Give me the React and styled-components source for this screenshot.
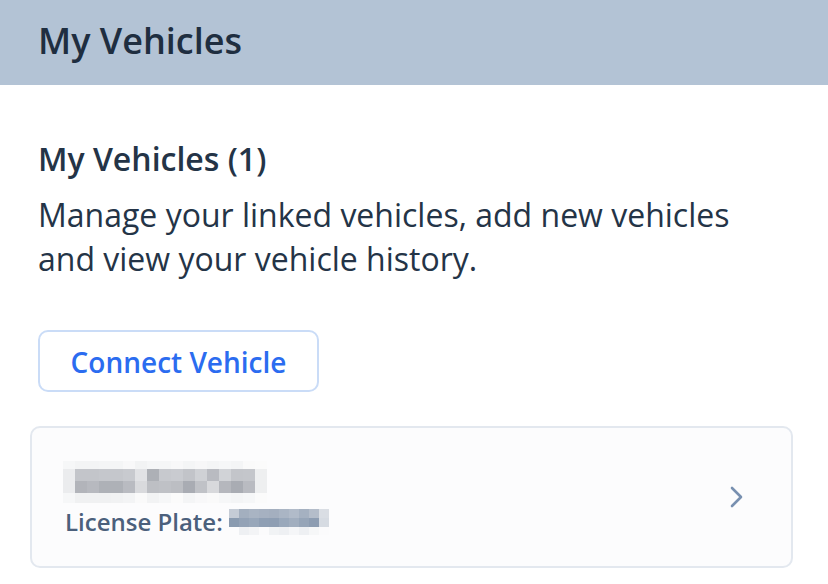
import React from "react";
import styled, { createGlobalStyle } from "styled-components";

const Global = createGlobalStyle`
  html, body { margin: 0; padding: 0; background: #ffffff; }
  body { font-family: "Open Sans", "Noto Sans", sans-serif; color: #243447; }
`;

const Page = styled.div`
  width: 828px;
  min-height: 584px;
  display: flex;
  flex-direction: column;
`;

const Header = styled.header`
  height: 85px;
  background: #b3c3d5;
  display: flex;
  align-items: center;
  padding: 0 38px;
  box-sizing: border-box;
`;

const HeaderTitle = styled.h1`
  margin: 0;
  font-size: 36px;
  font-weight: 600;
  color: #1f2e40;
  line-height: 1;
  padding-bottom: 4px;
`;

const Main = styled.main`
  display: flex;
  flex-direction: column;
  padding: 52px 35px 0 30px;
`;

const Intro = styled.section`
  padding-left: 8px;
  display: flex;
  flex-direction: column;
  align-items: flex-start;
`;

const SectionTitle = styled.h2`
  margin: 0;
  font-size: 32px;
  font-weight: 600;
  line-height: 44px;
  color: #243447;
`;

const Description = styled.p`
  margin: 12px 0 0;
  font-size: 32px;
  font-weight: 400;
  line-height: 44px;
  color: #243447;
`;

const OutlineButton = styled.button`
  margin-top: 49px;
  width: 281px;
  height: 62px;
  box-sizing: border-box;
  border: 2px solid #cadcf7;
  border-radius: 10px;
  background: #ffffff;
  font-family: inherit;
  font-size: 28px;
  font-weight: 600;
  color: #2b6cf0;
  display: flex;
  align-items: center;
  justify-content: center;
  padding: 2px 0 0;
  cursor: pointer;
`;

const VehicleCard = styled.div`
  margin-top: 34px;
  height: 142px;
  box-sizing: border-box;
  border: 2px solid #e3e8ef;
  border-radius: 10px;
  background: #fcfcfd;
  display: flex;
  align-items: center;
  justify-content: space-between;
  padding: 0 46px 0 31px;
`;

const VehicleInfo = styled.div`
  display: flex;
  flex-direction: column;
  padding-top: 4px;
`;

const PlateRow = styled.div`
  display: flex;
  align-items: center;
  font-size: 24px;
  font-weight: 600;
  color: #4b607c;
  line-height: 30px;
  margin-top: 4px;
  padding-left: 2px;
`;

const Chevron = styled.svg`
  width: 16px;
  height: 24px;
  flex: none;
`;

const nameRows = [
  ["#f6f7f8","#f3f4f5","#f3f4f5","#f4f5f6","#f4f5f6","#f8f8f9","#f2f3f4","#f5f6f7","#f5f6f7","#f8f8f9","#f4f5f6","#f7f7f8","#f4f5f6","#f6f7f8","#f4f5f6","#fafafa","#fbfbfb"],
  ["#ebecee","#c3c5ca","#c3c5ca","#c5c7cc","#c5c7cc","#c8cacf","#e1e2e5","#adb0b6","#c7c9ce","#c9cbd0","#c2c4c9","#cfd1d5","#b9bbc1","#d1d3d7","#c3c5ca","#c4c6cb","#eeeff0"],
  ["#ebecee","#b2b4ba","#b7b9bf","#aeb1b7","#aeb1b7","#b9bbc1","#d9dadd","#bdbfc4","#bfc1c6","#bcbec3","#a9acb3","#c0c2c7","#d8d9dc","#b5b7bd","#a9acb3","#b9bbc1","#eeeff0"],
  ["#f6f7f8","#f0f1f2","#f0f1f2","#f0f1f2","#f1f2f3","#f3f4f5","#fafafa","#f2f3f4","#f6f7f8","#fbfbfb","#f4f5f6","#f8f8f9","#fafafa","#f6f7f8","#f4f5f6","#f6f7f8","#fbfbfb"],
];

const plateRows = [
  ["#c5ccd6","#a3afbf","#a9b4c3","#a6b1c1","#a4afbf","#aab5c4","#b1bbc9","#a5b1c1","#b4bdca","#dadee4"],
  ["#8a9bb0","#93a2b6","#98a7ba","#8f9fb4","#8e9eb3","#99a8bb","#a1aebf","#96a5b8","#8d9db2","#d6dbe2"],
  ["#fcfcfd","#eef0f3","#f3f4f6","#fbfbfc","#f1f3f5","#eef0f3","#f5f6f8","#eef0f3","#f6f7f8","#fbfbfc"],
];

function Pixelated({ rows, cell, heights, width }) {
  let y = 0;
  const total = heights.reduce((a, b) => a + b, 0);
  return (
    <svg width={width} height={total} aria-hidden="true" style={{ display: "block" }}>
      {rows.map((row, r) => {
        const h = heights[r];
        const rects = row.map((c, i) => (
          <rect key={i} x={i * cell} y={y} width={cell + 0.5} height={h + 0.5} fill={c} />
        ));
        y += h;
        return <g key={r}>{rects}</g>;
      })}
    </svg>
  );
}

export default function App() {
  return (
    <>
      <Global />
      <Page>
        <Header>
          <HeaderTitle>My Vehicles</HeaderTitle>
        </Header>
        <Main>
          <Intro>
            <SectionTitle>My Vehicles (1)</SectionTitle>
            <Description>
              Manage your linked vehicles, add new vehicles
              <br />
              and view your vehicle history.
            </Description>
            <OutlineButton>Connect Vehicle</OutlineButton>
          </Intro>
          <VehicleCard>
            <VehicleInfo>
              <Pixelated rows={nameRows} cell={12} heights={[8, 12, 12, 10]} width={204} />
              <PlateRow>
                License Plate:&nbsp;
                <Pixelated rows={plateRows} cell={10} heights={[9, 9, 8]} width={100} />
              </PlateRow>
            </VehicleInfo>
            <Chevron viewBox="0 0 16 24" aria-hidden="true">
              <path d="M3 3 L12 12 L3 21" fill="none" stroke="#7890b0" strokeWidth="2.6" strokeLinecap="round" strokeLinejoin="round" />
            </Chevron>
          </VehicleCard>
        </Main>
      </Page>
    </>
  );
}
